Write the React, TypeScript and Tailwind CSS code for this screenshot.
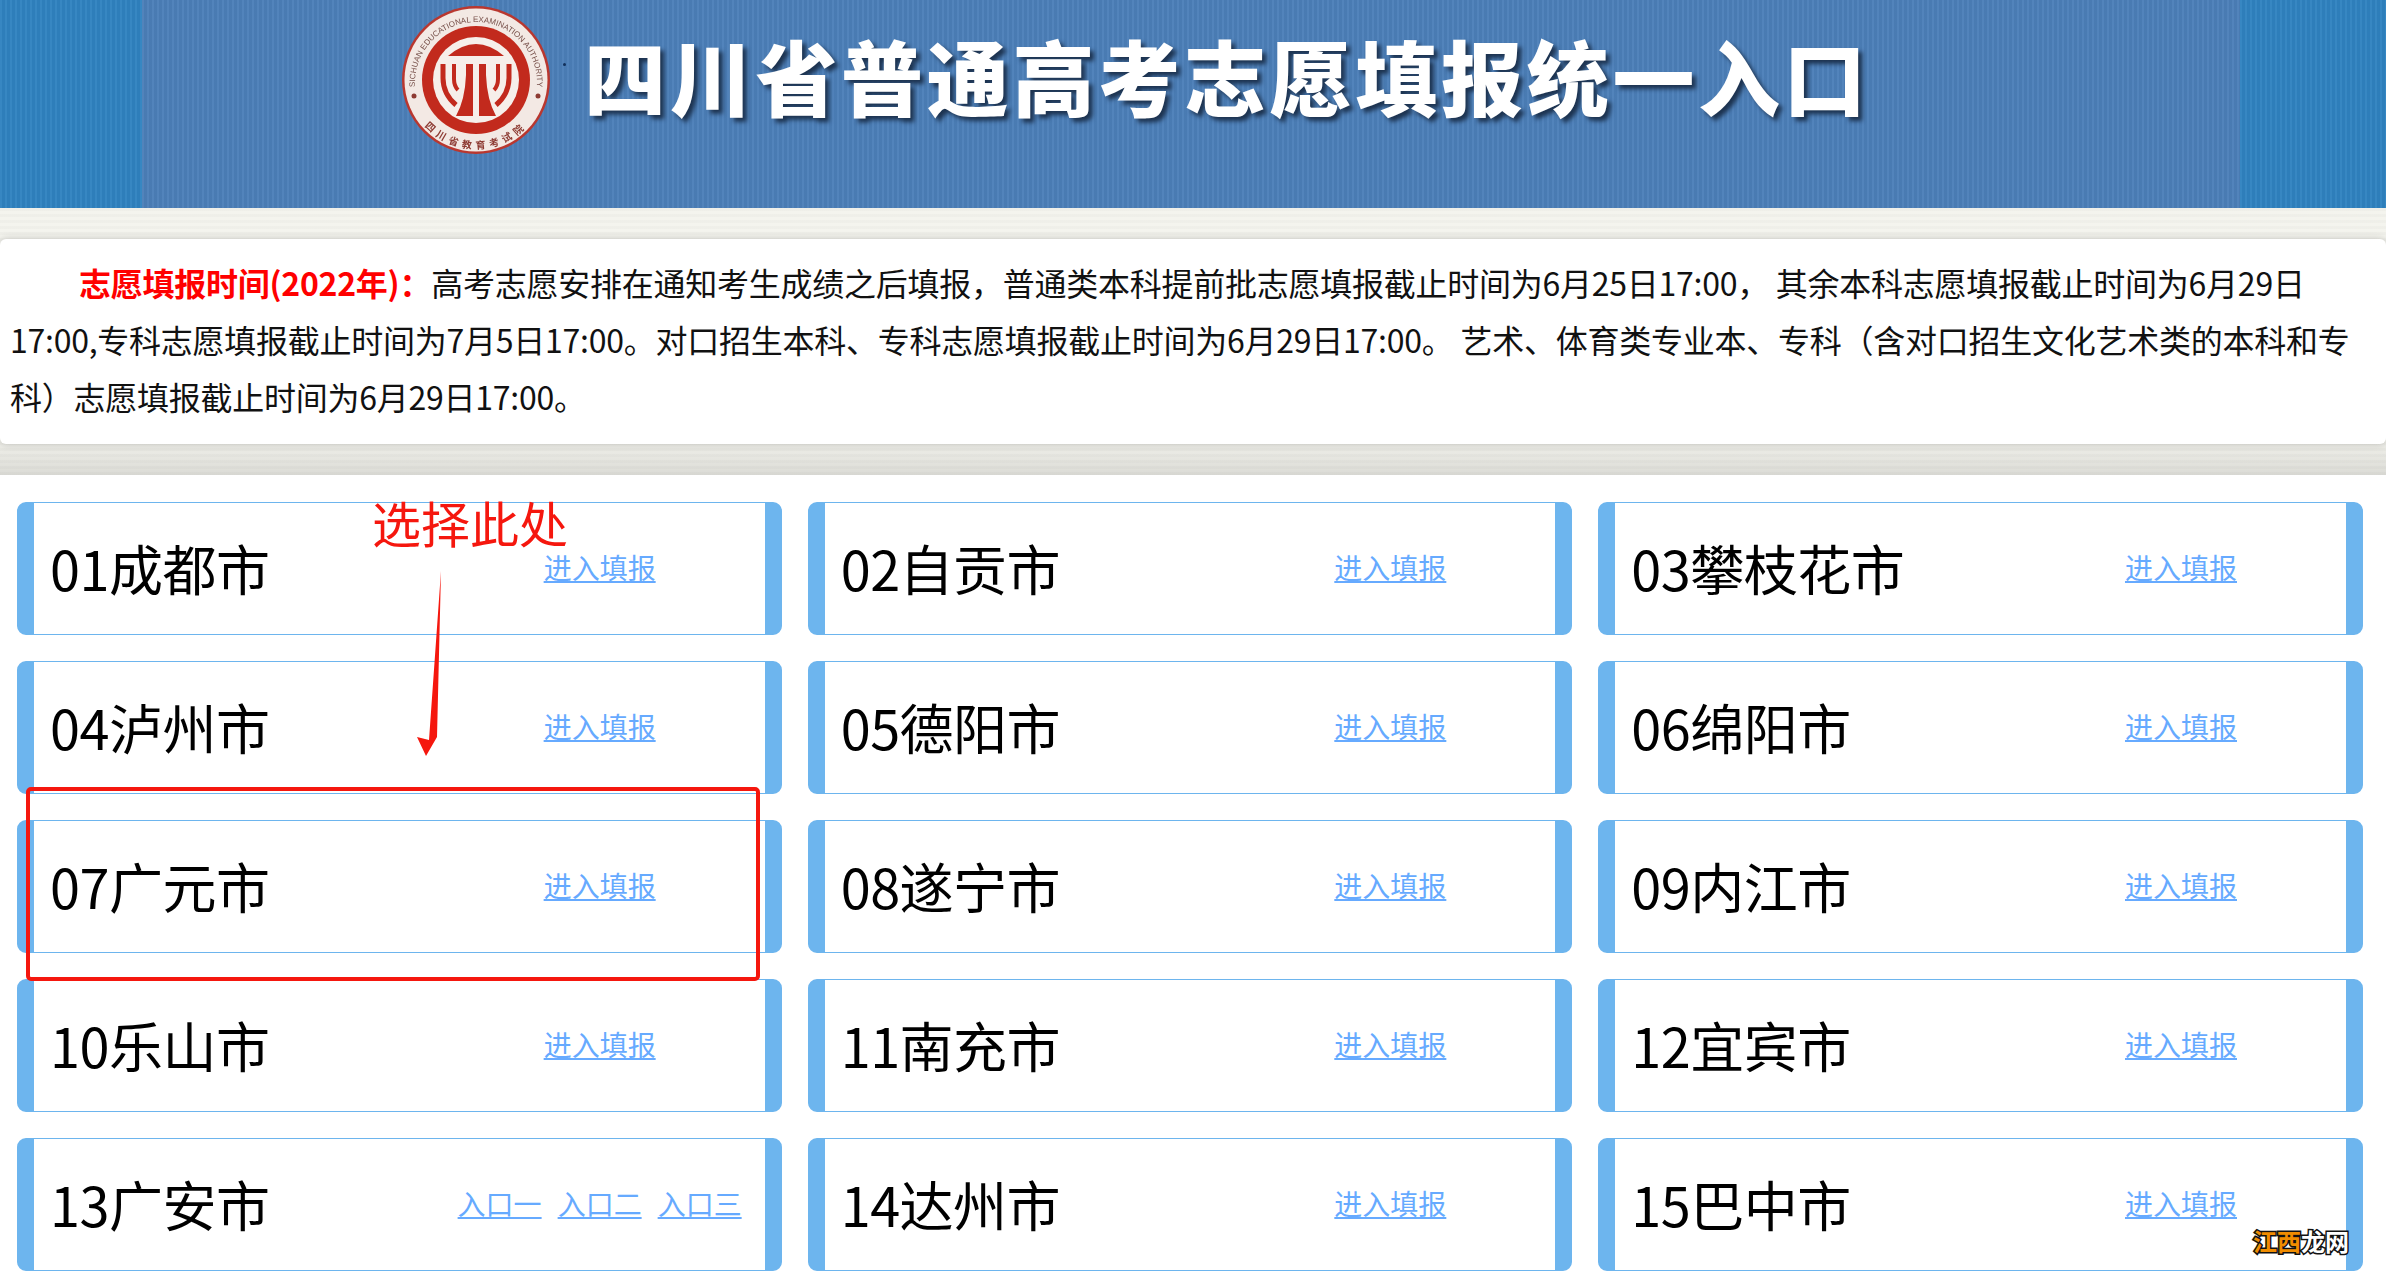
const cities = [
  '01成都市', '02自贡市', '03攀枝花市',
  '04泸州市', '05德阳市', '06绵阳市',
  '07广元市', '08遂宁市', '09内江市',
  '10乐山市', '11南充市', '12宜宾市',
  '13广安市', '14达州市', '15巴中市',
];

const cjk = "font-['Noto_Sans_CJK_SC',sans-serif]";

function Logo() {
  return (
    <svg viewBox="-76 -76 152 152" className="w-[152px] h-[152px] blur-[0.6px]">
      <defs>
        <path id="logoTop" d="M -60 14 A 61 61 0 1 1 60 14" />
        <path id="logoBottom" d="M -60 34 A 69 69 0 0 0 60 34" />
      </defs>
      <circle r="74" fill="#b9372f" />
      <circle r="71.5" fill="#f3e9e4" />
      <circle r="54" fill="#c22a1d" />
      <circle r="43" fill="#f6efea" />
      <path d="M-28 -24 Q0 -48 28 -24Z" fill="#c22a1d" />
      <path d="M-10 -16H-3V36H-20Q-11 20 -10 -5Z" fill="#c22a1d" />
      <path d="M10 -16H3V36H20Q11 20 10 -5Z" fill="#c22a1d" />
      <path d="M-33 -16V-2Q-33 14 -20 25" fill="none" stroke="#c22a1d" strokeWidth="5" />
      <path d="M33 -16V-2Q33 14 20 25" fill="none" stroke="#c22a1d" strokeWidth="5" />
      <path d="M-22 -16V-1Q-22 6 -18 10" fill="none" stroke="#c22a1d" strokeWidth="4" />
      <path d="M22 -16V-1Q22 6 18 10" fill="none" stroke="#c22a1d" strokeWidth="4" />
      <circle cx="-62" cy="16" r="2.5" fill="#8d3a32" />
      <circle cx="62" cy="16" r="2.5" fill="#8d3a32" />
      <text fontSize="8" fill="#77504a" fontFamily="Liberation Sans, sans-serif">
        <textPath href="#logoTop" startOffset="50%" textAnchor="middle">SICHUAN EDUCATIONAL EXAMINATION AUTHORITY</textPath>
      </text>
      <text fontSize="10" letterSpacing="4.5" fill="#8d3a32" fontWeight="700" fontFamily="Noto Sans CJK SC, sans-serif">
        <textPath href="#logoBottom" startOffset="50%" textAnchor="middle">四川省教育考试院</textPath>
      </text>
    </svg>
  );
}

function Banner() {
  return (
    <div className="h-[208px] flex bg-[#2f82c0] bg-[repeating-linear-gradient(90deg,rgba(255,255,255,0.04)_0_2px,rgba(0,0,0,0.03)_2px_5px)]">
      <div className="w-[142px] shrink-0" />
      <div className="relative flex-1 flex items-start pl-[258px] pt-[4px] bg-[#4c7fb9] bg-[repeating-linear-gradient(90deg,rgba(255,255,255,0.035)_0_2px,rgba(0,0,0,0.035)_2px_5px)]">
        <Logo />
        <div className={`${cjk} ml-[32px] mt-[21px] text-[82px] leading-[100px] font-black text-white tracking-[3.7px] whitespace-nowrap [text-shadow:4px_4px_4px_#1d3350]`}>
          四川省普通高考志愿填报统一入口
        </div>
        <div className="absolute left-[421px] top-[63px] w-[3px] h-[3px] rounded-full bg-[#12305a]" />
      </div>
      <div className="w-[146px] shrink-0" />
    </div>
  );
}

function Notice() {
  return (
    <div className="pt-[31px] pb-[31px] bg-[#f4f4ee] bg-[linear-gradient(180deg,transparent_85%,rgba(0,0,0,0.1)_100%),repeating-linear-gradient(0deg,rgba(0,0,0,0.02)_0_3px,transparent_3px_6px)]">
      <div className={`${cjk} h-[205px] bg-white rounded-[6px] px-[10px] pt-[15px] text-[32px] leading-[57px] text-[#111] tracking-[-0.25px] shadow-[0_0_8px_rgba(0,0,0,0.2)]`}>
        <div className="pl-[69px] whitespace-nowrap">
          <strong className="text-[#ff0000]">志愿填报时间(2022年)：</strong>高考志愿安排在通知考生成绩之后填报，普通类本科提前批志愿填报截止时间为6月25日17:00， 其余本科志愿填报截止时间为6月29日
        </div>
        <div className="whitespace-nowrap">17:00,专科志愿填报截止时间为7月5日17:00。对口招生本科、专科志愿填报截止时间为6月29日17:00。 艺术、体育类专业本、专科（含对口招生文化艺术类的本科和专</div>
        <div className="whitespace-nowrap">科）志愿填报截止时间为6月29日17:00。</div>
      </div>
    </div>
  );
}

function EntryLink({ label }: { label: string }) {
  return <a href="#" className="text-[28px] leading-[36px] text-[#66aaff] underline">{label}</a>;
}

function CityCard({ name }: { name: string }) {
  const multi = name === '13广安市';
  return (
    <div className="h-[133px] flex items-center border-y border-x-[17px] border-[#6db5ee] rounded-[9px] bg-white pl-[16px]">
      <div className="flex-1 mb-[2px] text-[54px] leading-[70px] text-black tracking-[-0.5px] whitespace-nowrap">{name}</div>
      {multi ? (
        <div className="flex gap-[16px] pr-[23px] mb-[4px]">
          <EntryLink label="入口一" />
          <EntryLink label="入口二" />
          <EntryLink label="入口三" />
        </div>
      ) : (
        <div className="pr-[109px] mb-[4px]">
          <EntryLink label="进入填报" />
        </div>
      )}
    </div>
  );
}

function Annotation() {
  return (
    <>
      <div className={`${cjk} absolute left-[372px] top-[487px] text-[49px] leading-[70px] text-[#f5170e]`}>选择此处</div>
      <svg className="absolute left-[410px] top-[565px] w-[40px] h-[200px]" viewBox="0 0 40 200">
        <path d="M31 6 L27 172 L16 191 L7 172 L19 175 Z" fill="#f5170e" />
      </svg>
      <div className="absolute left-[26px] top-[787px] w-[734px] h-[194px] border-[4px] border-[#f5170e] rounded-[5px]" />
      <div className={`${cjk} absolute left-[2253px] top-[1224px] text-[24px] leading-[34px] font-bold whitespace-nowrap [-webkit-text-stroke:3px_#111] [paint-order:stroke_fill]`}>
        <span className="text-[#f08c00]">江西</span><span className="text-white">龙网</span>
      </div>
    </>
  );
}

export default function App() {
  return (
    <div className={`${cjk} relative h-screen overflow-hidden bg-white`}>
      <Banner />
      <Notice />
      <div className="grid grid-cols-3 gap-x-[26px] gap-y-[26px] pl-[17px] pr-[23px] pt-[27px]">
        {cities.map((c) => (
          <CityCard key={c} name={c} />
        ))}
      </div>
      <Annotation />
    </div>
  );
}
